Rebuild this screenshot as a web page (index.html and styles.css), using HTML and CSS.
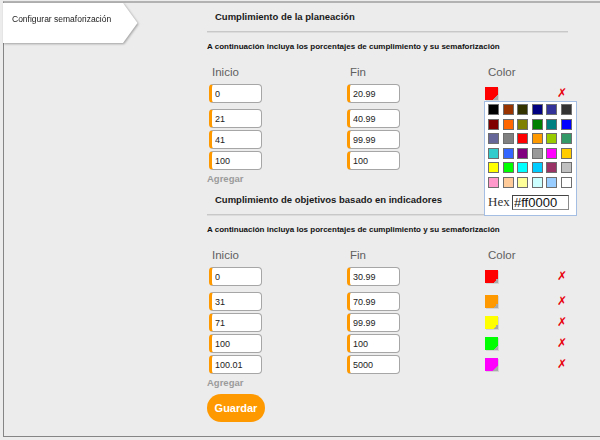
FILE: index.html
```html
<!DOCTYPE html>
<html lang="es">
<head>
<meta charset="utf-8">
<title>Configurar semaforización</title>
<link rel="stylesheet" href="styles.css">
</head>
<body>
<div class="frame">
  <aside class="side">
    <div class="tab-wrap"><div class="tab">Configurar semaforización</div></div>
  </aside>
  <main class="main">
    <section class="block">
      <h2 class="block-title">Cumplimiento de la planeación</h2>
      <p class="block-sub">A continuación incluya los porcentajes de cumplimiento y su semaforización</p>
      <div class="cols head">
        <span class="col-label">Inicio</span><span class="col-label">Fin</span><span class="col-label">Color</span>
      </div>
      <div class="rows">
        <div class="cols row first">
          <input class="num" type="text" value="0">
          <input class="num" type="text" value="20.99">
          <div class="color-cell">
            <span class="swatch" style="background-color:#ff0000"></span>
            <div class="picker">
              <div class="palette">
                <span style="background:#000000"></span><span style="background:#993300"></span><span style="background:#333300"></span><span style="background:#000080"></span><span style="background:#333399"></span><span style="background:#333333"></span>
                <span style="background:#800000"></span><span style="background:#ff6600"></span><span style="background:#808000"></span><span style="background:#008000"></span><span style="background:#008080"></span><span style="background:#0000ff"></span>
                <span style="background:#666699"></span><span style="background:#808080"></span><span style="background:#ff0000"></span><span style="background:#ff9900"></span><span style="background:#99cc00"></span><span style="background:#339966"></span>
                <span style="background:#33cccc"></span><span style="background:#3366ff"></span><span style="background:#800080"></span><span style="background:#999999"></span><span style="background:#ff00ff"></span><span style="background:#ffcc00"></span>
                <span style="background:#ffff00"></span><span style="background:#00ff00"></span><span style="background:#00ffff"></span><span style="background:#00ccff"></span><span style="background:#993366"></span><span style="background:#c0c0c0"></span>
                <span style="background:#ff99cc"></span><span style="background:#ffcc99"></span><span style="background:#ffff99"></span><span style="background:#ccffff"></span><span style="background:#99ccff"></span><span style="background:#ffffff"></span>
              </div>
              <div class="hex-row">
                <label class="hex-label">Hex</label>
                <input class="hex-input" type="text" value="#ff0000">
              </div>
            </div>
          </div>
          <span class="del">✗</span>
        </div>
        <div class="cols row">
          <input class="num" type="text" value="21">
          <input class="num" type="text" value="40.99">
          <div class="color-cell"><span class="swatch" style="background-color:#ff9900"></span></div>
          <span class="del">✗</span>
        </div>
        <div class="cols row">
          <input class="num" type="text" value="41">
          <input class="num" type="text" value="99.99">
          <div class="color-cell"><span class="swatch" style="background-color:#ffff00"></span></div>
          <span class="del">✗</span>
        </div>
        <div class="cols row">
          <input class="num" type="text" value="100">
          <input class="num" type="text" value="100">
          <div class="color-cell"><span class="swatch" style="background-color:#00ff00"></span></div>
          <span class="del">✗</span>
        </div>
      </div>
      <div class="add">Agregar</div>
    </section>

    <section class="block">
      <h2 class="block-title">Cumplimiento de objetivos basado en indicadores</h2>
      <p class="block-sub">A continuación incluya los porcentajes de cumplimiento y su semaforización</p>
      <div class="cols head">
        <span class="col-label">Inicio</span><span class="col-label">Fin</span><span class="col-label">Color</span>
      </div>
      <div class="rows">
        <div class="cols row first">
          <input class="num" type="text" value="0">
          <input class="num" type="text" value="30.99">
          <div class="color-cell"><span class="swatch" style="background-color:#ff0000"></span></div>
          <span class="del">✗</span>
        </div>
        <div class="cols row">
          <input class="num" type="text" value="31">
          <input class="num" type="text" value="70.99">
          <div class="color-cell"><span class="swatch" style="background-color:#ff9900"></span></div>
          <span class="del">✗</span>
        </div>
        <div class="cols row">
          <input class="num" type="text" value="71">
          <input class="num" type="text" value="99.99">
          <div class="color-cell"><span class="swatch" style="background-color:#ffff00"></span></div>
          <span class="del">✗</span>
        </div>
        <div class="cols row">
          <input class="num" type="text" value="100">
          <input class="num" type="text" value="100">
          <div class="color-cell"><span class="swatch" style="background-color:#00ff00"></span></div>
          <span class="del">✗</span>
        </div>
        <div class="cols row">
          <input class="num" type="text" value="100.01">
          <input class="num" type="text" value="5000">
          <div class="color-cell"><span class="swatch" style="background-color:#ff00ff"></span></div>
          <span class="del">✗</span>
        </div>
      </div>
      <div class="add">Agregar</div>
      <button class="save" type="button">Guardar</button>
    </section>
  </main>
</div>
</body>
</html>
```

FILE: styles.css
```css
html, body {
  margin: 0;
  padding: 0;
  background: #ececec;
  overflow: hidden;
}

body {
  font-family: "Liberation Sans", Arial, sans-serif;
  color: #222;
}

.frame {
  box-sizing: border-box;
  height: 436px;
  margin: 1px 0 0 3px;
  border-top: 2px solid #b2b2b2;
  border-left: 1px solid #858585;
  border-bottom: 1px solid #858585;
  box-shadow: 0 1px 0 #d9d9d9;
  display: flex;
}

.side {
  flex: 0 0 204px;
  margin-left: -1px;
}

.tab-wrap {
  width: 136px;
  filter: drop-shadow(1px 1px 1px rgba(0, 0, 0, 0.32));
}

.tab {
  box-sizing: border-box;
  width: 135px;
  height: 40px;
  padding: 9px 0 0 9px;
  background: #fff;
  font-size: 8.5px;
  line-height: 14px;
  color: #1a1a1a;
  clip-path: polygon(0 0, 120px 0, 134.5px 50%, 120px 100%, 0 100%);
}

.main {
  flex: 0 0 361px;
  width: 361px;
}

.block-title {
  margin: 0;
  height: 28px;
  padding-left: 8px;
  font-size: 9.5px;
  line-height: 28px;
  font-weight: bold;
  color: #1a1a1a;
  border-bottom: 1px solid #c8c8c8;
  box-shadow: 0 1px 0 #dcdcdc;
}

.block-sub {
  margin: 9px 0 0 0;
  font-size: 8px;
  line-height: 12px;
  font-weight: bold;
  color: #111;
}

.cols {
  display: grid;
  grid-template-columns: 138px 138px 72px 20px;
  padding-left: 2px;
}

.head {
  margin-top: 11px;
  height: 16px;
}

.col-label {
  padding-left: 3px;
  font-size: 11.5px;
  line-height: 16px;
  color: #606060;
}

.rows {
  margin-top: 4px;
  display: flex;
  flex-direction: column;
  gap: 2px;
}

.row {
  height: 19px;
  align-items: center;
}

.row.first {
  margin-bottom: 4px;
}

.num {
  box-sizing: border-box;
  width: 53px;
  height: 19px;
  margin: 0;
  padding: 0 0 0 3px;
  border: 1px solid #a6a6a6;
  border-left: 3px solid #ff9900;
  border-radius: 4px;
  background: #fff;
  font-family: "Liberation Sans", Arial, sans-serif;
  font-size: 9px;
  color: #222;
  outline: none;
}

.color-cell {
  position: relative;
  height: 19px;
  display: flex;
  align-items: center;
}

.swatch {
  width: 13px;
  height: 13px;
  background-image: linear-gradient(135deg, transparent 50%, #a8a8a8 50%);
  background-size: 5px 5px;
  background-position: right bottom;
  background-repeat: no-repeat;
  box-shadow: 1px 1px 0 #d4d4d4;
}

.del {
  font-family: "DejaVu Sans", sans-serif;
  font-size: 12px;
  line-height: 19px;
  color: #e8000b;
}

.picker {
  position: absolute;
  z-index: 5;
  top: 17px;
  left: -1px;
  box-sizing: border-box;
  width: 93px;
  height: 115px;
  padding: 2px 0 0 3px;
  background: #fff;
  border: 1px solid #a3bde3;
}

.palette {
  display: grid;
  grid-template-columns: repeat(6, 11px);
  grid-auto-rows: 11px;
  gap: 3.5px;
}

.palette span {
  box-sizing: border-box;
  border: 1px solid #6e6e6e;
}

.hex-row {
  margin-top: 7px;
  display: flex;
  align-items: center;
  height: 15px;
}

.hex-label {
  width: 24px;
  font-family: "Liberation Serif", "Times New Roman", serif;
  font-size: 13px;
  color: #333;
}

.hex-input {
  box-sizing: border-box;
  width: 57px;
  height: 15px;
  margin: 0;
  padding: 0 1px;
  border: 1px solid #8a8a8a;
  border-top-color: #444;
  border-left-color: #444;
  background: #fff;
  font-family: "Liberation Sans", Arial, sans-serif;
  font-size: 13px;
  line-height: 13px;
  color: #111;
  outline: none;
}

.add {
  margin-top: 2px;
  font-size: 9.5px;
  line-height: 14px;
  font-weight: bold;
  color: #9b9b9b;
}

.save {
  display: block;
  margin: 4px 0 0 0;
  width: 58px;
  height: 28px;
  padding: 0;
  border: none;
  border-radius: 14px;
  background: #ff9900;
  color: #fff;
  font-family: "Liberation Sans", Arial, sans-serif;
  font-size: 11px;
  font-weight: bold;
}
```
